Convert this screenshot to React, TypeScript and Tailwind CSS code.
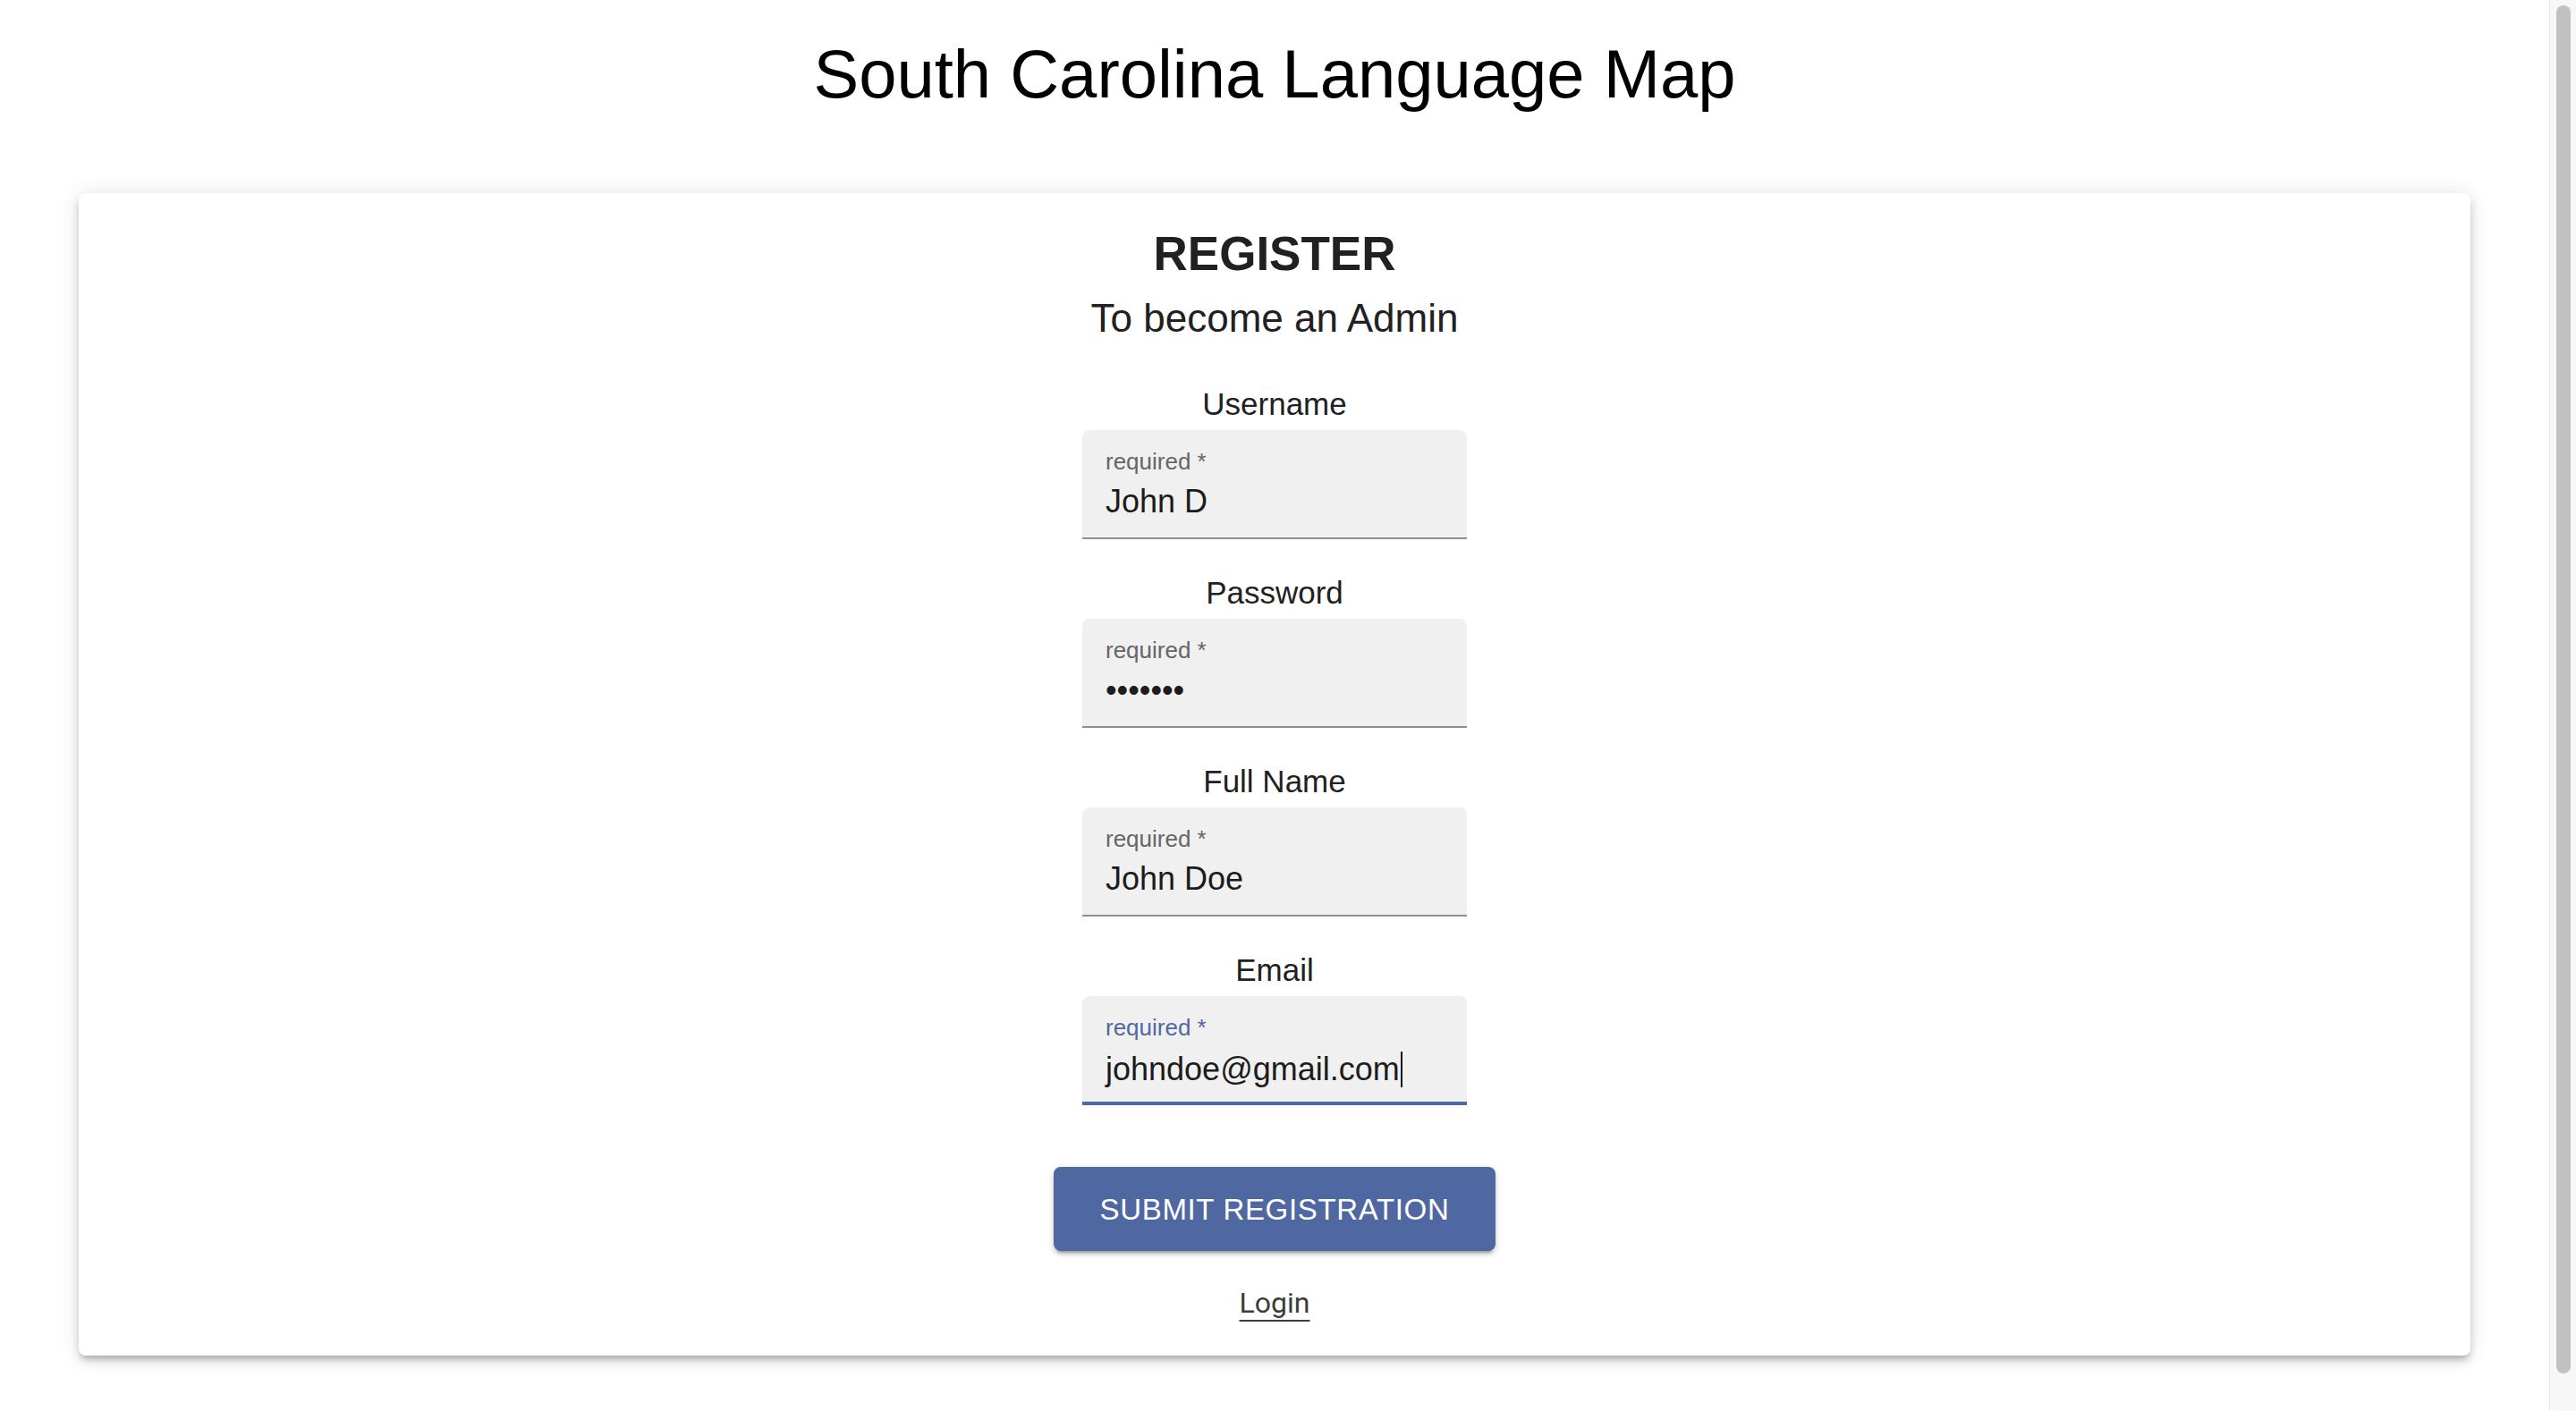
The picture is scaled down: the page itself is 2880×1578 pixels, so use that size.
const fields = [
  { label: "Username", value: "John D" },
  { label: "Password", value: "•••••••" },
  { label: "Full Name", value: "John Doe" },
  { label: "Email", value: "johndoe@gmail.com", focused: true },
]

function Field({ label, value, focused }: { label: string; value: string; focused?: boolean }) {
  const boxClass = focused
    ? "border-b-4 border-[#5068a1]"
    : "border-b-2 border-[#8f8f8f]"

  return (
    <div className="flex flex-col items-center">
      <label className="text-[35px] leading-[35px] text-[#212121]">{label}</label>
      <div className={`mt-[12px] flex h-[122px] w-[430px] flex-col rounded-t-[8px] bg-[#f0f0f0] pl-[26px] pt-[22px] ${boxClass}`}>
        <span className={`text-[26px] leading-[26px] ${focused ? "text-[#5068a1]" : "text-[#666666]"}`}>
          required *
        </span>
        <span className="mt-[14px] flex items-center text-[36px] leading-[36px] text-[#1c1c1c]">
          {value}
          {focused && <span className="ml-[1px] h-[40px] w-[2px] bg-[#111]" />}
        </span>
      </div>
    </div>
  )
}

export default function App() {
  return (
    <div className="flex h-screen overflow-hidden bg-white font-['Liberation_Sans',Arial,sans-serif]">
      <main className="flex-1">
        {/* Header */}
        <h1 className="pt-[45px] text-center text-[76px] leading-[76px] text-black">
          South Carolina Language Map
        </h1>

        {/* Register card */}
        <div className="mx-[88px] mt-[95px] flex flex-col items-center rounded-[8px] bg-white pb-[43px] pt-[41px] shadow-[0_6px_6px_-4px_rgba(0,0,0,0.2),0_6px_10px_0_rgba(0,0,0,0.14),0_2px_24px_0_rgba(0,0,0,0.12)]">
          <h2 className="text-[53px] font-bold leading-[53px] text-[#212121]">REGISTER</h2>
          <p className="mt-[24px] text-[44px] leading-[44px] text-[#212121]">To become an Admin</p>

          <div className="mt-[56px] flex flex-col gap-[42px]">
            {fields.map((f) => (
              <Field key={f.label} label={f.label} value={f.value} focused={f.focused} />
            ))}
          </div>

          <button
            type="button"
            className="mt-[69px] flex h-[94px] w-[494px] items-center justify-center rounded-[8px] bg-[#5068a1] text-[33px] leading-none tracking-[0.02em] text-white shadow-[0_6px_2px_-4px_rgba(0,0,0,0.2),0_4px_4px_0_rgba(0,0,0,0.14),0_2px_10px_0_rgba(0,0,0,0.12)]"
          >
            SUBMIT REGISTRATION
          </button>

          <a
            href="#"
            className="mt-[42px] font-['Roboto',sans-serif] text-[32px] leading-[32px] text-[#3c3c3c] underline decoration-2 underline-offset-[8px]"
          >
            Login
          </a>
        </div>
      </main>

      {/* Scrollbar */}
      <aside className="h-screen w-[30px] border-l border-[#e6e6e6] bg-[#f7f7f7]">
        <div className="ml-[7px] mt-[6px] h-[1530px] w-[16px] rounded-full bg-[#c1c1c1]" />
      </aside>
    </div>
  )
}
